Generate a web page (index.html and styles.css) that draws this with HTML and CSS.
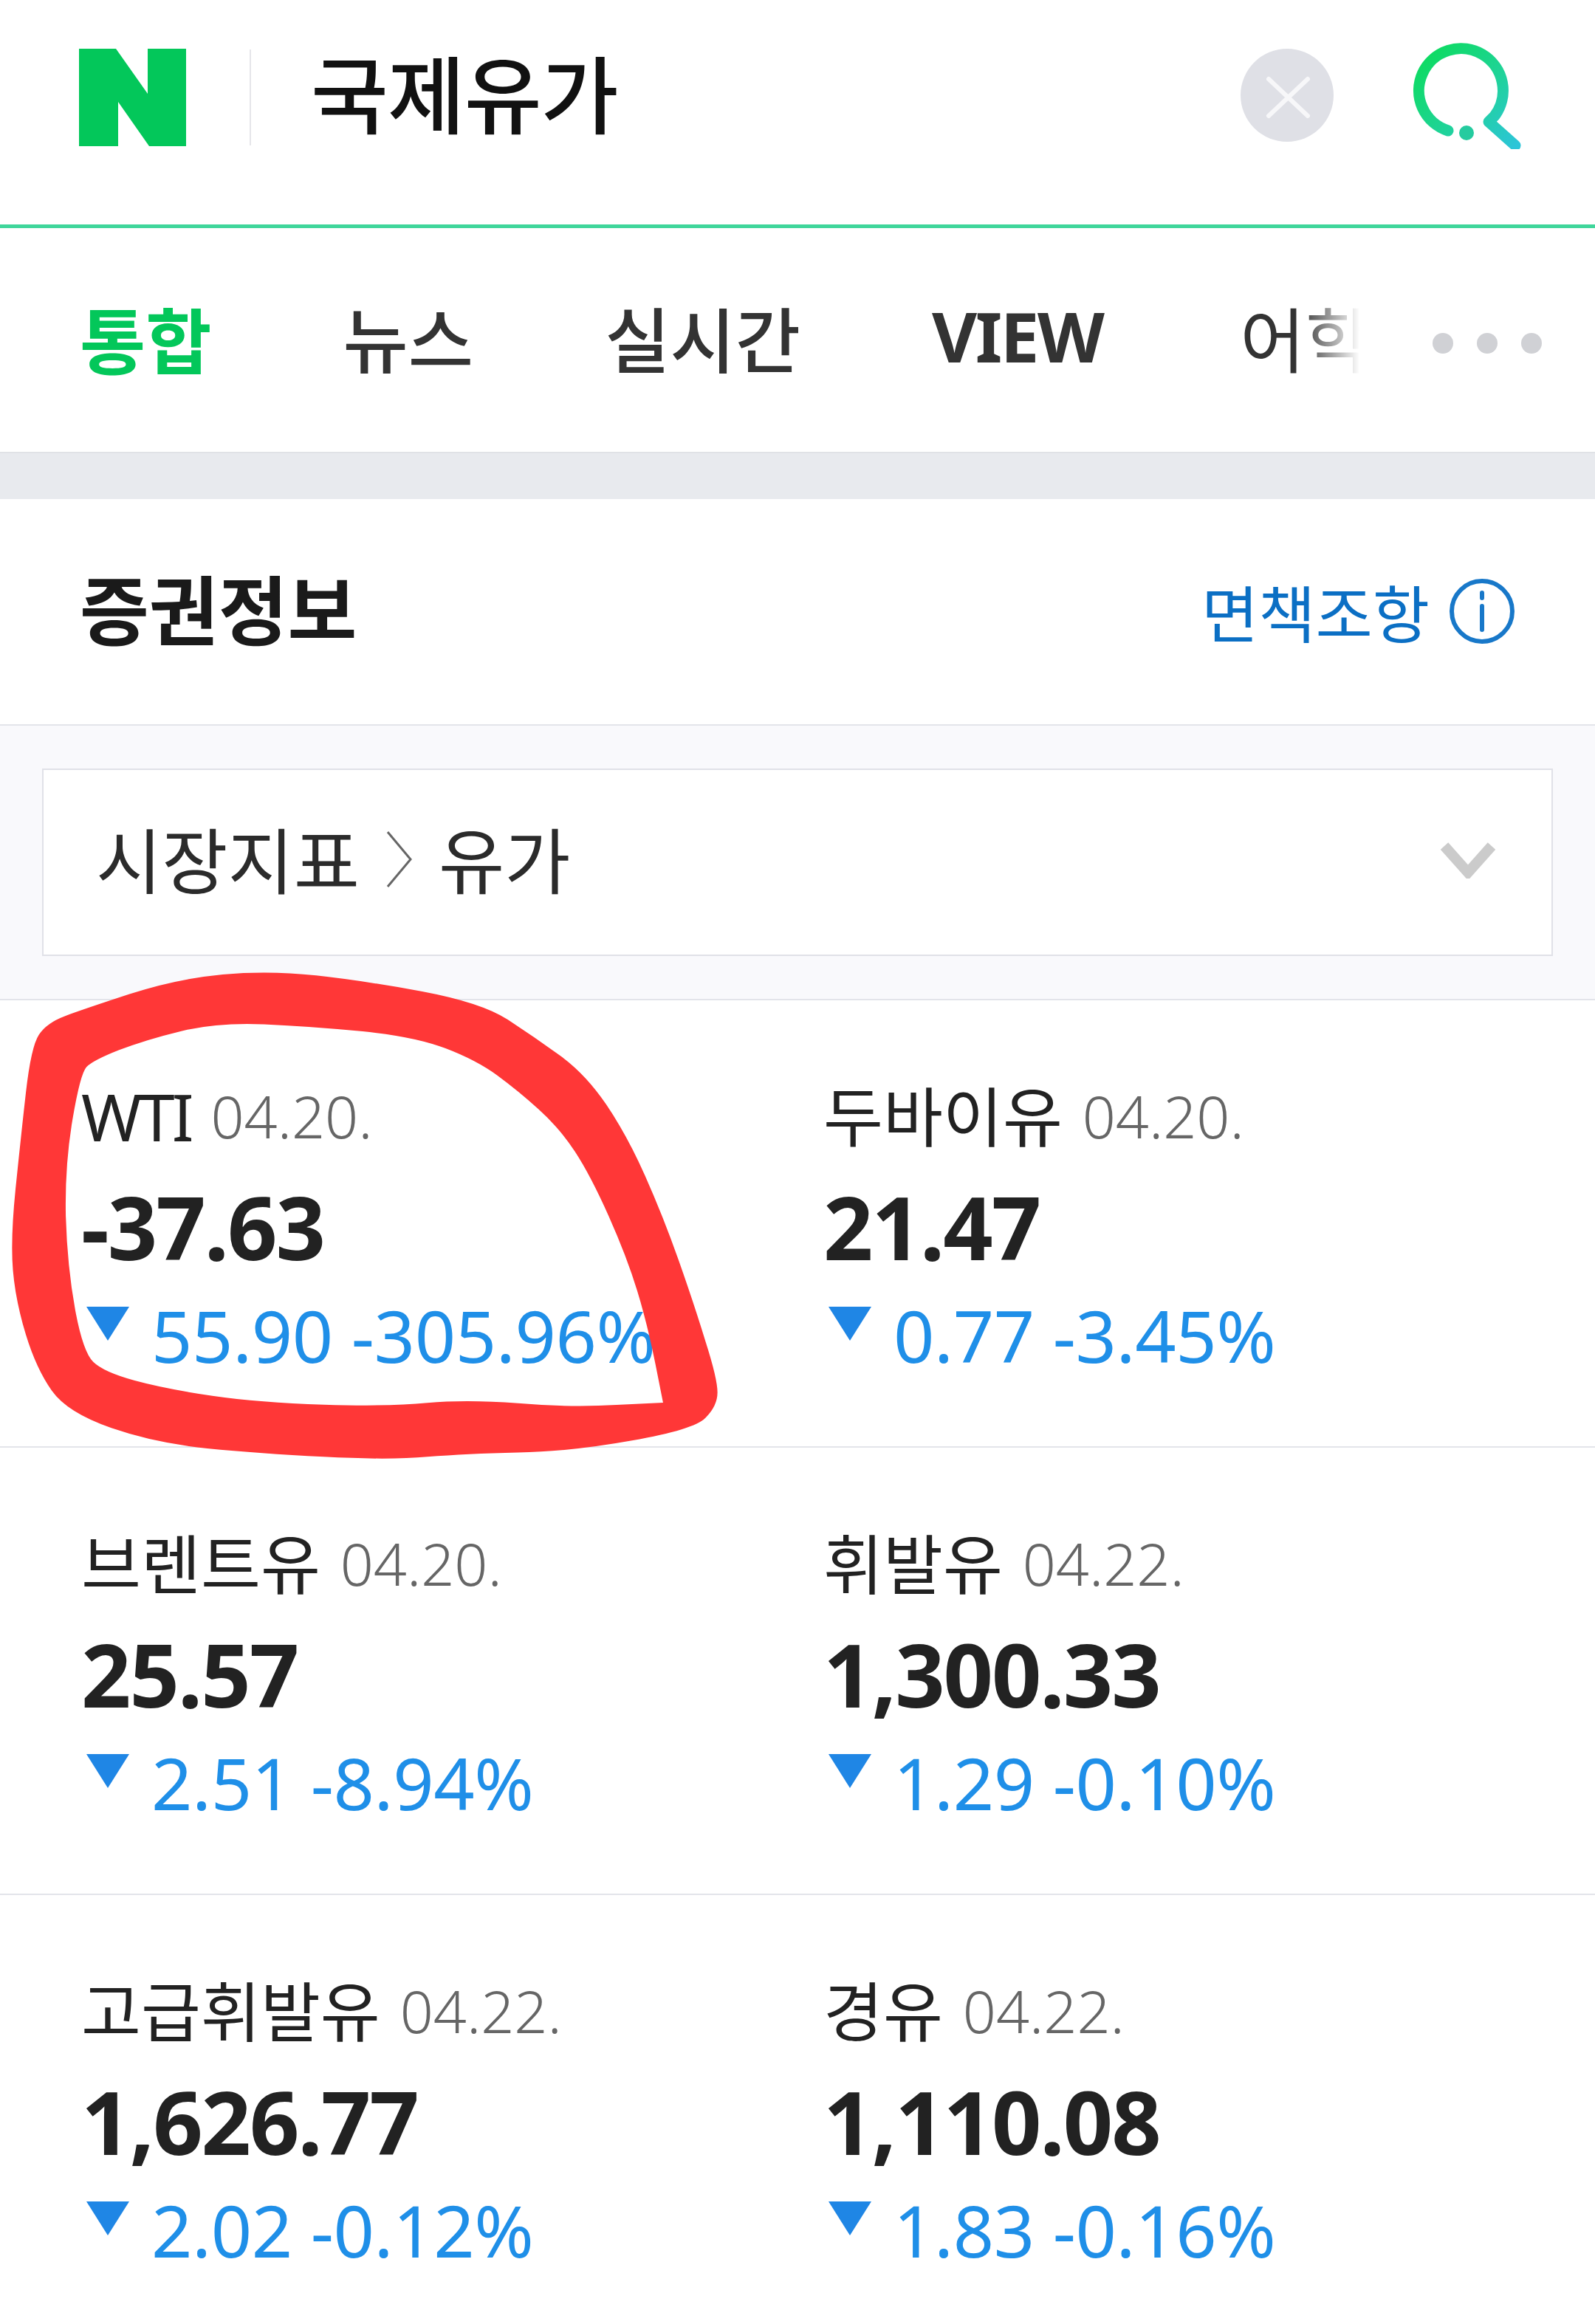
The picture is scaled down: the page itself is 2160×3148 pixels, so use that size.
FILE: index.html
```html
<!DOCTYPE html>
<html lang="ko">
<head>
  <meta charset="UTF-8">
  <title>국제유가 : 네이버 통합검색</title>
  <link rel="stylesheet" href="styles.css">
</head>
<body>
  <div class="page">
    <!-- Search bar -->
    <header class="search-bar">
      <svg class="logo" viewBox="0 0 145 132"><polygon points="0,0 50,0 93,61 93,0 145,0 145,132 95,132 53,72 53,132 0,132"/></svg>
      <span class="search-divider"></span>
      <h1 class="query">국제유가</h1>
      <span class="clear-btn">
        <svg viewBox="0 0 126 126"><path d="M38 41 L91 91 M91 41 L38 91"/></svg>
      </span>
      <svg class="search-icon" viewBox="0 0 150 150">
        <defs>
          <linearGradient id="searchGrad" x1="0" y1="0" x2="1" y2="1">
            <stop offset="0" stop-color="#0bdc5a"/>
            <stop offset="0.55" stop-color="#1fd398"/>
            <stop offset="1" stop-color="#2cc5d8"/>
          </linearGradient>
        </defs>
        <path d="M51 125 A57 57 0 1 1 114 105 L106 113 L142 145" stroke="url(#searchGrad)"/>
        <circle cx="76" cy="128" r="10" fill="#25cb9f"/>
      </svg>
    </header>

    <!-- Tabs -->
    <nav class="tabs">
      <div class="tab-list">
        <a class="tab tab-active">통합</a>
        <a class="tab">뉴스</a>
        <a class="tab">실시간</a>
        <a class="tab tab-latin">VIEW</a>
        <a class="tab tab-cut">어학</a>
      </div>
      <div class="more-dots"><i></i><i></i><i></i></div>
    </nav>

    <div class="band"></div>

    <!-- Stock info -->
    <section class="stock">
      <div class="stock-head">
        <h2>증권정보</h2>
        <a class="notice">면책조항
          <svg viewBox="0 0 90 90"><circle cx="45" cy="45" r="41"/><path d="M45 38 V70 M45 20 V27"/></svg>
        </a>
      </div>

      <div class="select-wrap">
        <div class="select-box">
          <span class="crumb">시장지표</span>
          <svg class="crumb-arrow" viewBox="0 0 37 80"><path d="M3 3 L34 40 L3 77"/></svg>
          <span class="crumb">유가</span>
          <svg class="chevron" viewBox="0 0 76 50"><path d="M6 6 L38 42 L70 6"/></svg>
        </div>
      </div>

      <div class="quote-row">
        <div class="quote">
          <div class="quote-name"><span class="name-latin">WTI</span> <span class="quote-date">04.20.</span></div>
          <div class="quote-price">-37.63</div>
          <div class="quote-change"><span class="arrow-down"></span>55.90 -305.96%</div>
        </div>
        <div class="quote">
          <div class="quote-name">두바이유 <span class="quote-date">04.20.</span></div>
          <div class="quote-price">21.47</div>
          <div class="quote-change"><span class="arrow-down"></span>0.77 -3.45%</div>
        </div>
      </div>
      <div class="quote-row">
        <div class="quote">
          <div class="quote-name">브렌트유 <span class="quote-date">04.20.</span></div>
          <div class="quote-price">25.57</div>
          <div class="quote-change"><span class="arrow-down"></span>2.51 -8.94%</div>
        </div>
        <div class="quote">
          <div class="quote-name">휘발유 <span class="quote-date">04.22.</span></div>
          <div class="quote-price">1,300.33</div>
          <div class="quote-change"><span class="arrow-down"></span>1.29 -0.10%</div>
        </div>
      </div>
      <div class="quote-row">
        <div class="quote">
          <div class="quote-name">고급휘발유 <span class="quote-date">04.22.</span></div>
          <div class="quote-price">1,626.77</div>
          <div class="quote-change"><span class="arrow-down"></span>2.02 -0.12%</div>
        </div>
        <div class="quote">
          <div class="quote-name">경유 <span class="quote-date">04.22.</span></div>
          <div class="quote-price">1,110.08</div>
          <div class="quote-change"><span class="arrow-down"></span>1.83 -0.16%</div>
        </div>
      </div>
    </section>

    <!-- Hand drawn circle on top of the screenshot -->
    <svg class="scribble" viewBox="0 0 1568 1568" preserveAspectRatio="none">
      <path fill-rule="evenodd" d="M610 90 Q700 105 815 137 Q930 170 980 220 Q1030 270 1080 325 Q1130 380 1170 470 Q1210 560 1245 680 Q1280 800 1310 930 Q1340 1060 1362 1170 Q1385 1280 1385 1320 Q1385 1360 1362 1395 Q1340 1430 1220 1462 Q1100 1495 1000 1497 Q900 1500 825 1510 Q750 1520 625 1510 Q500 1500 400 1485 Q300 1470 215 1425 Q130 1380 100 1315 Q70 1250 50 1150 Q30 1050 25 960 Q20 870 30 720 Q40 570 50 435 Q60 300 75 265 Q90 230 125 210 Q160 190 250 145 Q340 100 430 87 Q520 75 610 90 Z
        M510 234 Q600 240 700 255 Q800 270 860 305 Q920 340 960 385 Q1000 430 1040 485 Q1080 540 1110 610 Q1140 680 1175 800 Q1210 920 1230 1020 Q1250 1120 1265 1235 L1280 1350 L1190 1357 Q1100 1365 1000 1352 Q900 1340 825 1351 Q750 1362 625 1356 Q500 1350 410 1330 Q320 1310 260 1285 Q200 1260 180 1230 Q160 1200 145 1075 Q130 950 127 800 Q125 650 140 515 Q155 380 167 360 Q180 340 230 310 Q280 280 350 254 Q420 228 510 234 Z"/>
    </svg>
  </div>
</body>
</html>
```

FILE: styles.css
```css
/* General page styles */
body {
  margin: 0;
  background: #fff;
  font-family: "Noto Sans", "Noto Sans CJK KR", sans-serif;
  color: #222;
}

.page {
  position: relative;
  width: 2160px;
  height: 3148px;
  overflow: hidden;
}

/* Search bar */
.search-bar {
  display: flex;
  align-items: center;
  height: 304px;
  padding: 0 100px 0 107px;
  border-bottom: 5px solid #3fd69b;
}

.logo {
  width: 145px;
  height: 132px;
  margin-top: -40px;
  fill: #03c75a;
}

.search-divider {
  width: 2px;
  height: 130px;
  margin: -40px 0 0 86px;
  background: #e6e6ea;
}

.query {
  margin: -60px 0 0 81px;
  font-family: "Noto Sans CJK KR", sans-serif;
  font-size: 114px;
  font-weight: 500;
  letter-spacing: -1px;
  color: #111;
}

.clear-btn {
  display: flex;
  width: 126px;
  height: 126px;
  margin: -46px 0 0 auto;
  border-radius: 50%;
  background: #dfe0e6;
}

.clear-btn path {
  stroke: #f7f7f9;
  stroke-width: 6;
  stroke-linecap: round;
}

.search-icon {
  width: 150px;
  height: 150px;
  margin: -50px 0 0 104px;
}

.search-icon path {
  fill: none;
  stroke-width: 15;
  stroke-linecap: round;
  stroke-linejoin: round;
}

/* Tabs */
.tabs {
  display: flex;
  align-items: center;
  height: 303px;
  padding-left: 108px;
}

.tab-list {
  display: flex;
  gap: 178px;
  width: 1732px;
  margin-top: -8px;
  white-space: nowrap;
}

.tab {
  font-family: "Noto Sans CJK KR", sans-serif;
  font-size: 96px;
  font-weight: 500;
  color: #333;
}

.tab-active {
  color: #03c75a;
  font-size: 97px;
  font-weight: 700;
}

.tab-latin {
  position: relative;
  top: 5px;
  font-family: "Noto Sans", sans-serif;
  font-size: 94px;
  font-weight: 700;
  letter-spacing: -2.5px;
}

.tab-cut {
  margin-left: 8px;
  -webkit-mask-image: linear-gradient(to right, #000 80px, transparent 162px);
  mask-image: linear-gradient(to right, #000 80px, transparent 162px);
  font-weight: 400;
}

.more-dots {
  display: flex;
  gap: 32px;
  margin: 8px 0 0 100px;
}

.more-dots i {
  width: 28px;
  height: 28px;
  border-radius: 50%;
  background: #d0d1d5;
}

.band {
  height: 64px;
  background: #e8eaee;
  border-top: 2px solid #e0e2e6;
  box-sizing: border-box;
}

/* Stock section */
.stock-head {
  display: flex;
  align-items: center;
  justify-content: space-between;
  height: 305px;
  padding: 0 108px;
  border-bottom: 2px solid #e3e4ea;
}

.stock-head h2 {
  margin: -14px 0 0;
  font-family: "Noto Sans CJK KR", sans-serif;
  font-size: 102px;
  font-weight: 700;
  color: #1a1a1a;
}

.notice {
  display: flex;
  align-items: center;
  gap: 26px;
  margin-top: -2px;
  font-family: "Noto Sans CJK KR", sans-serif;
  font-size: 84px;
  color: #0b6fc4;
}

.notice svg {
  width: 90px;
  height: 90px;
  fill: none;
  stroke: #1878c9;
  stroke-width: 6;
  stroke-linecap: round;
}

.select-wrap {
  padding: 58px 57px;
  background: #f9f9fc;
  border-bottom: 2px solid #e3e4ea;
}

.select-box {
  display: flex;
  align-items: center;
  gap: 35px;
  height: 250px;
  padding: 0 75px 0 71px;
  background: #fff;
  border: 2px solid #e0e1e8;
  font-family: "Noto Sans CJK KR", sans-serif;
  font-size: 97px;
  color: #2b2b2b;
}

.crumb {
  margin-top: -16px;
}

.crumb-arrow {
  width: 37px;
  height: 80px;
  margin-top: -8px;
  fill: none;
  stroke: #666;
  stroke-width: 3;
}

.chevron {
  width: 76px;
  height: 50px;
  margin: -6px 0 0 auto;
  fill: none;
  stroke: #cbcbcb;
  stroke-width: 14;
}

/* Quote grid */
.quote-row {
  display: grid;
  grid-template-columns: 1005px 1fr;
  height: 604px;
  padding-left: 110px;
  border-bottom: 2px solid #e3e4ea;
}

.quote {
  padding-top: 107px;
}

.quote-name {
  height: 100px;
  line-height: 100px;
  font-family: "Noto Sans", "Noto Sans CJK KR", sans-serif;
  font-size: 88px;
  font-weight: 400;
  color: #222;
  white-space: nowrap;
}

.name-latin {
  letter-spacing: -4px;
}

.quote-date {
  position: relative;
  top: -4px;
  margin-left: 4px;
  font-size: 79px;
  font-weight: 300;
  color: #666;
}

.quote-price {
  margin-top: 25px;
  line-height: 150px;
  font-size: 118px;
  font-weight: 700;
  letter-spacing: -2px;
  color: #222;
}

.quote-change {
  display: flex;
  align-items: center;
  margin-top: 11px;
  line-height: 120px;
  font-size: 97px;
  font-weight: 400;
  letter-spacing: -0.4px;
  color: #1f8fe8;
  white-space: pre;
}

.arrow-down {
  width: 0;
  height: 0;
  margin: -30px 30px 0 7px;
  border-left: 29px solid transparent;
  border-right: 29px solid transparent;
  border-top: 46px solid #1f86e5;
}

/* Red marker circle */
.scribble {
  position: absolute;
  top: 1280px;
  left: 0;
  width: 1100px;
  height: 720px;
  pointer-events: none;
}

.scribble path {
  fill: #ff3737;
}
```
